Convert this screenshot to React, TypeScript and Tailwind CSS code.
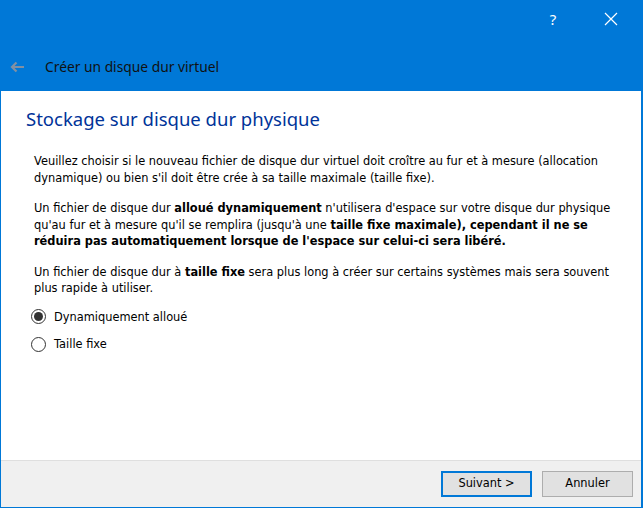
import React from 'react';

const ui = "font-['Noto_Sans','Open_Sans',sans-serif]";
const body = "font-['DejaVu_Sans','Verdana',sans-serif]";

export default function App() {
  return (
    <div className="w-[643px] h-[508px] bg-[#0078d7] pl-px pr-[2px] pb-px flex flex-col">
      {/* blue header */}
      <div className="h-[91px] flex flex-col">
        <div className="h-[38px] flex items-center justify-end">
          <span className={`${ui} text-white text-[15px] w-[20px] text-center mr-[41px]`}>?</span>
          <svg width="14" height="14" viewBox="0 0 14 14" className="mr-[23px]">
            <path d="M1 1 L13 13 M13 1 L1 13" stroke="#fff" strokeWidth="1.2" fill="none" />
          </svg>
        </div>
        <div className="flex items-center h-[30px] mt-[14px]">
          <svg width="15" height="12" viewBox="0 0 15 12" className="ml-[9px]">
            <path d="M14 6 H2 M6.5 1.5 L2 6 L6.5 10.5" stroke="#8190a2" strokeWidth="2.2" fill="none" />
          </svg>
          <span className={`${ui} text-[13.8px] text-[#111] ml-[20px]`}>Créer un disque dur virtuel</span>
        </div>
      </div>

      {/* content */}
      <div className="flex-1 bg-white px-[25px] pt-[14px]">
        <h1 className={`${ui} text-[18.5px] text-[#003399] leading-[28px]`}>Stockage sur disque dur physique</h1>
        <div className={`${body} text-[11.4px] text-black leading-[16.5px] pl-[8px] mt-[20px] flex flex-col gap-[14px]`}>
          <p className="w-[580px]">
            Veuillez choisir si le nouveau fichier de disque dur virtuel doit croître au fur et à mesure (allocation dynamique) ou bien s'il doit être crée à sa taille maximale (taille fixe).
          </p>
          <p className="w-[580px]">
            Un fichier de disque dur <b>alloué dynamiquement</b> n'utilisera d'espace sur votre disque dur physique qu'au fur et à mesure qu'il se remplira (jusqu'à une <b>taille fixe maximale), cependant il ne se réduira pas automatiquement lorsque de l'espace sur celui-ci sera libéré.</b>
          </p>
          <p className="w-[580px]">
            Un fichier de disque dur à <b>taille fixe</b> sera plus long à créer sur certains systèmes mais sera souvent plus rapide à utiliser.
          </p>
          <div className="flex flex-col gap-[11px] -ml-[3px] mt-[-2px]">
            <label className="flex items-center gap-[8px]">
              <span className="w-[15px] h-[15px] rounded-full border border-[#333] flex items-center justify-center">
                <span className="w-[9px] h-[9px] rounded-full bg-[#333]" />
              </span>
              <span>Dynamiquement alloué</span>
            </label>
            <label className="flex items-center gap-[8px]">
              <span className="w-[15px] h-[15px] rounded-full border border-[#333]" />
              <span>Taille fixe</span>
            </label>
          </div>
        </div>
      </div>

      {/* footer */}
      <div className="h-[47px] bg-[#f0f0f0] border-t border-[#dfdfdf] flex items-center justify-end gap-[10px] pr-[8px]">
        <button className={`${body} w-[91px] h-[26px] bg-[#e1e1e1] border-2 border-[#0078d7] text-[11.4px] text-black`}>Suivant &gt;</button>
        <button className={`${body} w-[91px] h-[26px] bg-[#e1e1e1] border border-[#adadad] text-[11.4px] text-black`}>Annuler</button>
      </div>
    </div>
  );
}
